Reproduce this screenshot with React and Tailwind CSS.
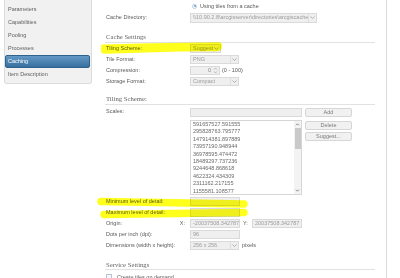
import React from "react";

const SANS = "font-['Liberation_Sans',Arial,sans-serif]";
const SERIF = "font-['Liberation_Serif','Times_New_Roman',serif]";

function Arrow() {
  return (
    <svg width="5" height="3" viewBox="0 0 5 3" className="block">
      <path d="M0.5 0.5 L2.5 2.5 L4.5 0.5" fill="none" stroke="#a8a8a8" strokeWidth="0.9" />
    </svg>
  );
}

function Sel({ cls, value, divider = true }) {
  return (
    <div className={`flex items-center border border-[#dadada] bg-[#efefef] text-[#9c9c9c] ${cls}`}>
      <span className="flex-1 whitespace-nowrap pl-[2px] leading-none">{value}</span>
      <span
        className={
          divider
            ? "flex h-full w-[8px] items-center justify-center border-l border-[#dedede]"
            : "flex h-full w-[7px] items-center justify-center"
        }
      >
        <Arrow />
      </span>
    </div>
  );
}

function Inp({ cls, value }) {
  return (
    <div className={`flex items-center border border-[#dadada] bg-[#efefef] pl-[2px] leading-none text-[#9c9c9c] ${cls}`}>
      {value}
    </div>
  );
}

function Row({ label, extra, children }) {
  return (
    <div className="flex h-[11px] items-center">
      <div className="flex w-[85px] shrink-0 items-center justify-between pl-[1px] pr-[5px]">
        <span>{label}</span>
        {extra}
      </div>
      {children}
    </div>
  );
}

function Btn({ children, cls }) {
  return (
    <div className={`flex h-[9px] w-[47px] items-center justify-center rounded-[2px] border border-[#d6d6d6] bg-[#f1f1f1] leading-none text-[#7a7a7a] ${cls}`}>
      {children}
    </div>
  );
}

const scales = [
  "591657527.591555",
  "295828763.795777",
  "147914381.897889",
  "73957190.948944",
  "36978595.474472",
  "18489297.737236",
  "9244648.868618",
  "4622324.434309",
  "2311162.217155",
  "1155581.108577",
];

const menu = ["Parameters", "Capabilities", "Pooling", "Processes", "Caching", "Item Description"];

export default function App() {
  return (
    <div className={`relative flex h-[278px] w-[400px] overflow-hidden bg-white text-[5.5px] text-[#5a5a5a] ${SANS}`}>
      {/* Sidebar */}
      <div className="w-[100px] shrink-0 pl-[4px]">
        <div className="w-[88px] rounded-b-[3px] border border-t-0 border-[#dcdcdc] bg-[#f1f1f1] pb-[2px] pt-[3px]">
          {menu.map((m) =>
            m === "Caching" ? (
              <div
                key={m}
                className="mr-[1px] flex h-[13px] items-center rounded-[2px] border border-[#2f628d] bg-gradient-to-b from-[#6499c6] to-[#36709f] pl-[2px] text-white"
              >
                {m}
              </div>
            ) : (
              <div key={m} className="flex h-[13px] items-center pl-[3px] text-[#5e5e5e]">
                {m}
              </div>
            )
          )}
        </div>
      </div>

      {/* Main */}
      <div className="h-full w-[287px] shrink-0 border-r border-[#dcdcdc] pl-[5px] pr-[11px]">
        <div className="flex h-[12px] items-center pl-[87px]">
          <span className="flex h-[5px] w-[5px] items-center justify-center rounded-full border border-[#b9cbe0] bg-white">
            <span className="h-[2px] w-[2px] rounded-full bg-[#6f9fd0]" />
          </span>
          <span className="ml-[3px]">Using tiles from a cache</span>
        </div>
        <Row label="Cache Directory:">
          <Sel cls="h-[10px] w-[127px] overflow-hidden" value="\\10.90.2.8\arcgisserver\directories\arcgiscache" />
        </Row>

        <div className={`mt-[9px] flex h-[11px] items-center border-b border-[#e2e2e2] pl-[1px] text-[6.7px] text-[#666] ${SERIF}`}>
          Cache Settings
        </div>
        <Row label="Tiling Scheme:">
          <Sel cls="h-[9px] w-[31px]" value="Suggest" divider={false} />
        </Row>
        <Row label="Tile Format:">
          <Sel cls="h-[9px] w-[49px]" value="PNG" />
        </Row>
        <Row label="Compression:">
          <div className="flex h-[9px] w-[30px] items-center border border-[#dadada] bg-[#efefef] text-[#8a8a8a]">
            <span className="flex-1 pr-[2px] text-right leading-none">0</span>
            <svg width="5" height="7" viewBox="0 0 5 7" className="mr-[1px] block">
              <path d="M1 2.6 L2.5 1 L4 2.6" fill="none" stroke="#aaa" strokeWidth="0.8" />
              <path d="M1 4.4 L2.5 6 L4 4.4" fill="none" stroke="#aaa" strokeWidth="0.8" />
            </svg>
          </div>
          <span className="ml-[2px]">(0 - 100)</span>
        </Row>
        <Row label="Storage Format:">
          <Sel cls="h-[9px] w-[49px]" value="Compact" />
        </Row>

        <div className={`mt-[8px] flex h-[10px] items-center border-b border-[#e2e2e2] pl-[1px] text-[6.7px] text-[#666] ${SERIF}`}>
          Tiling Scheme:
        </div>
        <div className="flex pt-[3px]">
          <div className="w-[85px] shrink-0 pl-[1px] leading-[7px]">Scales:</div>
          <div className="flex flex-col">
            <div className="flex items-center gap-[3px]">
              <div className="h-[9px] w-[112px] border border-[#dadada] bg-[#efefef]" />
              <Btn>Add</Btn>
            </div>
            <div className="mt-[3px] flex gap-[3px]">
              <div className="flex h-[75px] w-[112px] border border-[#d6d6d6] bg-white">
                <div className="flex-1 pl-[2px] leading-[7.4px] text-[#6a6a6a]">
                  {scales.map((s) => (
                    <div key={s}>{s}</div>
                  ))}
                </div>
                <div className="flex w-[7px] flex-col items-center bg-[#f3f3f3]">
                  <svg width="5" height="5" viewBox="0 0 5 5" className="mt-[1px] block">
                    <path d="M1 3.3 L2.5 1.8 L4 3.3" fill="none" stroke="#777" strokeWidth="0.9" />
                  </svg>
                  <div className="mt-[1px] h-[21px] w-[6px] bg-[#c9c9c9]" />
                  <div className="flex-1" />
                  <svg width="5" height="5" viewBox="0 0 5 5" className="mb-[1px] block">
                    <path d="M1 1.7 L2.5 3.2 L4 1.7" fill="none" stroke="#777" strokeWidth="0.9" />
                  </svg>
                </div>
              </div>
              <div className="flex flex-col pt-[1px]">
                <Btn>Delete</Btn>
                <Btn cls="mt-[2px]">Suggest...</Btn>
              </div>
            </div>
          </div>
        </div>

        <div className="mt-[1px]">
          <Row label="Minimum level of detail:">
            <Inp cls="h-[9px] w-[50px]" value="" />
          </Row>
          <Row label="Maximum level of detail:">
            <Inp cls="h-[9px] w-[50px]" value="" />
          </Row>
          <Row label="Origin:" extra={<span>X:</span>}>
            <Inp cls="h-[9px] w-[50px] overflow-hidden whitespace-nowrap" value="-20037508.342787" />
            <span className="ml-[3px] w-[9px]">Y:</span>
            <Inp cls="h-[9px] w-[50px] overflow-hidden whitespace-nowrap" value="20037508.342787" />
          </Row>
          <Row label="Dots per inch (dpi):">
            <Inp cls="h-[9px] w-[50px]" value="96" />
          </Row>
          <Row label="Dimensions (width x height):">
            <Sel cls="h-[9px] w-[49px]" value="256 x 256" />
            <span className="ml-[3px]">pixels</span>
          </Row>
        </div>

        <div className={`mt-[10px] flex h-[9px] items-center border-b border-[#e2e2e2] pl-[1px] text-[6.7px] text-[#666] ${SERIF}`}>
          Service Settings
        </div>
        <div className="flex items-center pl-[1px] pt-[3px]">
          <span className="h-[6px] w-[6px] border border-[#b8c4d2] bg-[#f6f8fb]" />
          <span className="ml-[5px]">Create tiles on demand</span>
        </div>
      </div>

      {/* Yellow marker highlights */}
      <svg
        className="pointer-events-none absolute left-0 top-0 mix-blend-multiply"
        width="400"
        height="278"
        viewBox="0 0 400 278"
      >
        <path d="M102 44.5 L150 43.2 L219 42.2 Q222.5 42.5 222 46.5 Q221.5 51 218 51.2 L180 51.5 L104 53.8 Q100.5 53.5 101 49 Q101 44.8 102 44.5 Z" fill="#ffff1e" />
        <path d="M101 201.5 L244 204" stroke="#ffff1e" strokeWidth="7.5" strokeLinecap="round" />
        <path d="M104 214.5 L244 212.5" stroke="#ffff1e" strokeWidth="7.5" strokeLinecap="round" />
      </svg>
    </div>
  );
}
